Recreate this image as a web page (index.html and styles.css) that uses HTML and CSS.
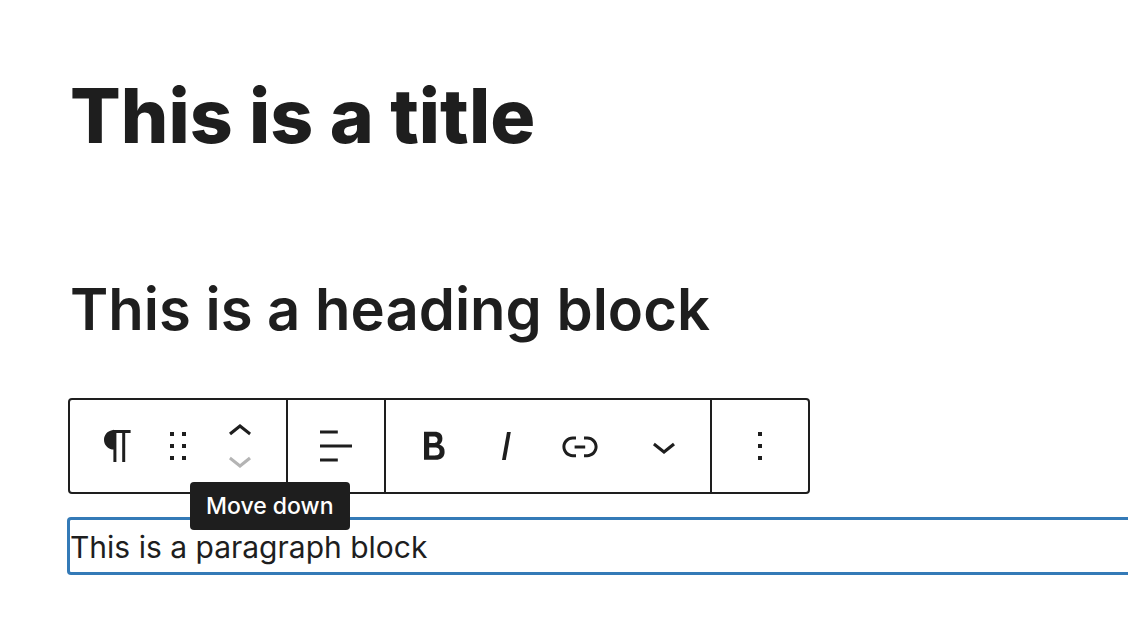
FILE: index.html
```html
<!DOCTYPE html>
<html lang="en">
<head>
  <meta charset="utf-8">
  <title>Block editor</title>
  <link rel="stylesheet" href="styles.css">
</head>
<body>
  <main class="editor">
    <h1 class="post-title">This is a title</h1>
    <h2 class="heading-block">This is a heading block</h2>

    <div class="toolbar" role="toolbar" aria-label="Block tools">
      <div class="group group-block">
        <button class="tool" aria-label="Paragraph">
          <svg class="icon" viewBox="0 0 24 24"><path d="M18.3 4H9.9v-.1l-.9.2c-2.3.4-4 2.4-4 4.8s1.7 4.4 4 4.8l.7.1V20h1.5V5.5h2.9V20h1.5V5.5h2.7V4z"/></svg>
        </button>
        <button class="tool drag" aria-label="Drag">
          <svg class="icon-drag" viewBox="0 0 18 18"><path d="M5 4h2V2H5v2zm6-2v2h2V2h-2zm-6 8h2V8H5v2zm6 0h2V8h-2v2zm-6 6h2v-2H5v2zm6 0h2v-2h-2v2z"/></svg>
        </button>
        <div class="mover">
          <button class="tool move" aria-label="Move up">
            <svg class="icon-move" viewBox="6 7 12 8"><path d="M6.5 12.4L12 8l5.5 4.4-.9 1.2L12 10l-4.5 3.6-1-1.2z"/></svg>
          </button>
          <button class="tool move" aria-describedby="move-tip" aria-label="Move down" disabled>
            <svg class="icon-move" viewBox="6 9 12 8"><path d="M17.5 11.6L12 16l-5.5-4.4.9-1.2L12 14l4.5-3.6 1 1.2z"/></svg>
          </button>
          <span class="tooltip" id="move-tip" role="tooltip">Move down</span>
        </div>
      </div>

      <div class="group">
        <button class="tool" aria-label="Align">
          <svg class="icon" viewBox="0 0 24 24"><path d="M4 19.8h8.9v-1.5H4v1.5zm8.9-15.6H4v1.5h8.9V4.2zm-8.9 7v1.5h16v-1.5H4z"/></svg>
        </button>
      </div>

      <div class="group group-format">
        <button class="tool" aria-label="Bold">
          <svg class="icon" viewBox="0 0 24 24"><path d="M14.7 11.3c1-.6 1.5-1.6 1.5-3 0-2.3-1.3-3.4-4-3.4H7v14h5.8c1.4 0 2.5-.3 3.3-1 .8-.7 1.2-1.7 1.2-2.9.1-1.9-.8-3.1-2.6-3.7zm-5.1-4h2.3c.6 0 1.1.1 1.4.4.3.3.5.7.5 1.2s-.2 1-.5 1.2c-.3.3-.8.4-1.4.4H9.6V7.3zm4.6 9c-.4.3-1 .4-1.7.4H9.6v-3.9h2.9c.7 0 1.3.2 1.7.5.4.3.6.8.6 1.4s-.2 1.2-.6 1.6z"/></svg>
        </button>
        <button class="tool" aria-label="Italic">
          <svg class="icon" viewBox="0 0 24 24"><path d="M12.5 5L10 19h1.9l2.5-14z"/></svg>
        </button>
        <button class="tool link" aria-label="Link">
          <svg class="icon" viewBox="0 0 24 24"><path d="M15.6 7.2H14v1.5h1.6c2 0 3.7 1.7 3.7 3.7s-1.7 3.7-3.7 3.7H14v1.5h1.6c2.8 0 5.2-2.3 5.2-5.2 0-2.9-2.3-5.2-5.2-5.2zM4.7 12.4c0-2 1.7-3.7 3.7-3.7H10V7.2H8.4c-2.9 0-5.2 2.3-5.2 5.2 0 2.9 2.3 5.2 5.2 5.2H10v-1.5H8.4c-2 0-3.7-1.7-3.7-3.7zm4.6.9h5.3v-1.5H9.3v1.5z"/></svg>
        </button>
        <button class="tool more" aria-label="More formatting">
          <svg class="icon" viewBox="0 0 24 24"><path d="M17.5 11.6L12 16l-5.5-4.4.9-1.2L12 14l4.5-3.6 1 1.2z"/></svg>
        </button>
      </div>

      <div class="group">
        <button class="tool" aria-label="Options">
          <svg class="icon" viewBox="0 0 24 24"><path d="M13 19h-2v-2h2v2zm0-6h-2v-2h2v2zm0-6h-2V5h2v2z"/></svg>
        </button>
      </div>
    </div>

    <p class="paragraph-block">This is a paragraph block</p>
  </main>
</body>
</html>
```
FILE: styles.css
```css
* {
  box-sizing: border-box;
}

body {
  margin: 0;
  background-color: #fff;
  color: #1e1e1e;
  font-family: Inter, "Liberation Sans", sans-serif;
}

.editor {
  padding: 70px 0 48px 70px;
}

.post-title {
  margin: 0 0 108px;
  font-size: 75px;
  font-weight: 800;
  line-height: 92px;
}

.heading-block {
  margin: 0 0 50px;
  font-size: 58px;
  font-weight: 600;
  line-height: 78px;
}

/* Toolbar */
.toolbar {
  display: flex;
  width: fit-content;
  height: 96px;
  margin-left: -2px;
  border: 2px solid #1e1e1e;
  border-radius: 4px;
  background-color: #fff;
}

.group {
  display: flex;
  align-items: center;
  padding: 0 24px;
}

.group + .group {
  border-left: 2px solid #1e1e1e;
}

.group-block {
  gap: 16px;
  padding-right: 20px;
}

.group-format {
  gap: 24px;
  padding-right: 12px;
}

.tool {
  display: flex;
  align-items: center;
  justify-content: center;
  width: 48px;
  height: 48px;
  padding: 0;
  border: none;
  background: none;
  color: inherit;
  cursor: pointer;
}

.tool:disabled {
  color: #b4b4b4;
  cursor: default;
}

.tool svg {
  flex-shrink: 0;
  fill: currentColor;
}

.drag {
  width: 40px;
  cursor: grab;
}

.move {
  width: 52px;
  height: 32px;
}

.link {
  width: 52px;
}

.more {
  width: 68px;
}

.icon {
  width: 48px;
  height: 48px;
}

.icon-drag {
  width: 36px;
  height: 36px;
}

.icon-move {
  width: 24px;
  height: 16px;
}

.mover {
  position: relative;
}

.tooltip {
  position: absolute;
  top: 68px;
  left: -24px;
  z-index: 1;
  padding: 0 16px;
  border-radius: 4px;
  background-color: #1e1e1e;
  color: #fff;
  font-size: 23px;
  font-weight: 500;
  line-height: 48px;
  white-space: nowrap;
}

/* Selected block */
.paragraph-block {
  margin: 23px 0 0 -3px;
  padding-top: 2px;
  border: 3px solid #347ab7;
  border-right: none;
  border-radius: 4px 0 0 4px;
  font-size: 30px;
  line-height: 50px;
}
```
